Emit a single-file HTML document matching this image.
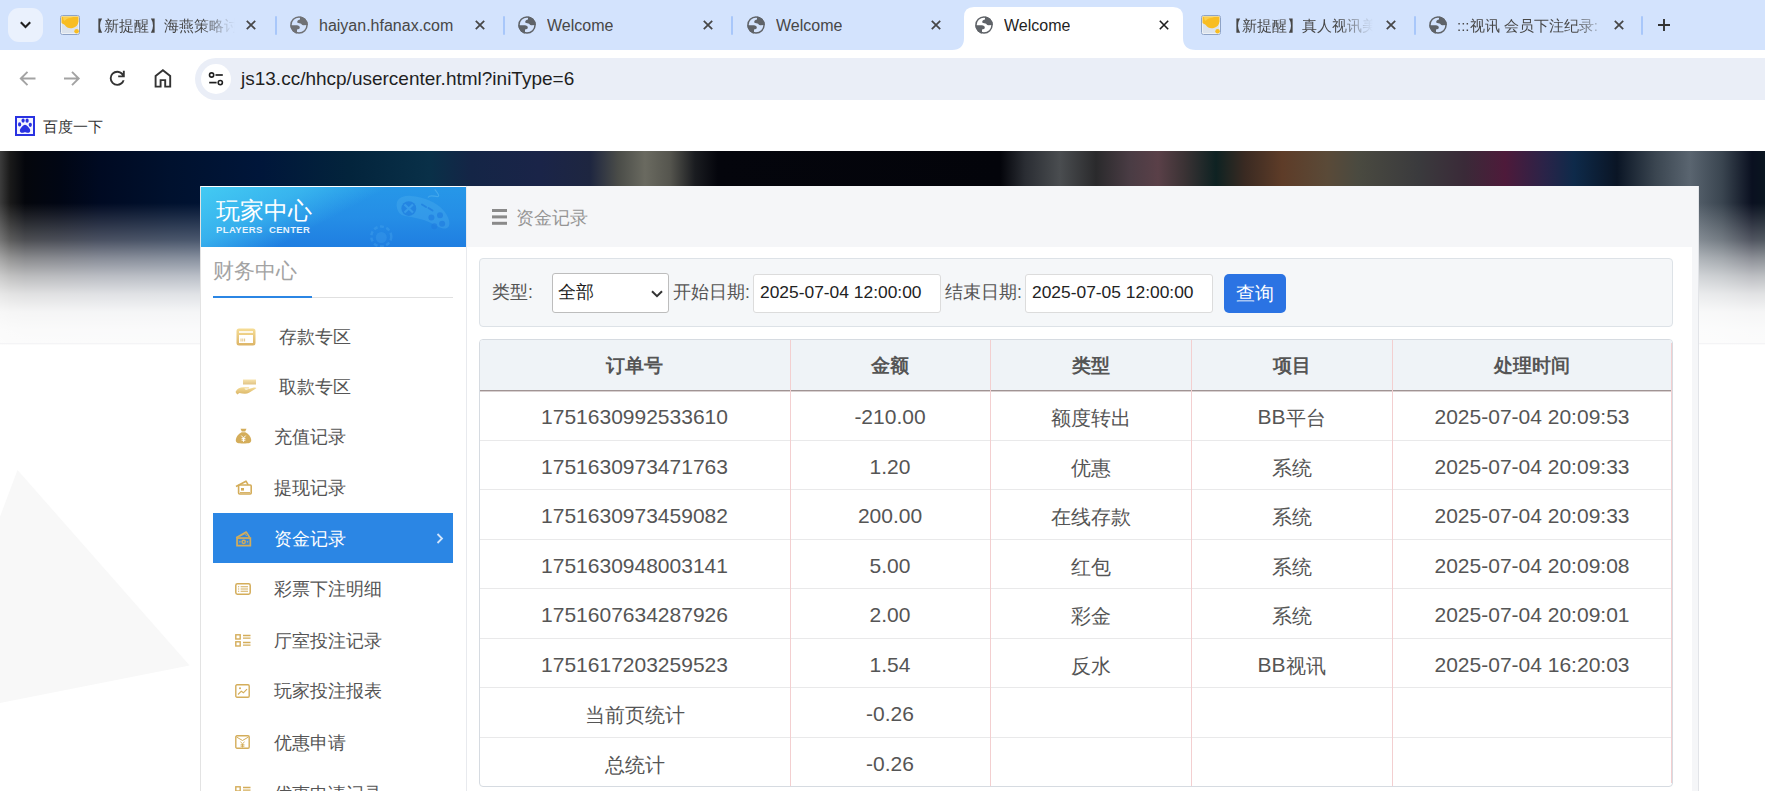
<!DOCTYPE html>
<html><head><meta charset="utf-8">
<style>
*{box-sizing:border-box;margin:0;padding:0}
html,body{width:1765px;height:791px;overflow:hidden;background:#fff;font-family:"Liberation Sans",sans-serif;position:relative}
.abs{position:absolute}
#tabs{left:0;top:0;width:1765px;height:50px;background:#d3e3fd}
#toolbar{left:0;top:50px;width:1765px;height:53px;background:#fff}
#bm{left:0;top:103px;width:1765px;height:48px;background:#fff}
#page{left:0;top:151px;width:1765px;height:640px;background:#fff;overflow:hidden}
.tabt{position:absolute;top:16px;font-size:16px;color:#474747;white-space:nowrap;overflow:hidden;line-height:20px}
.close{position:absolute;top:17px;width:16px;height:16px}
.fav{width:20px;height:20px;border:1px solid #9bb0d3;border-radius:2px;background:linear-gradient(160deg,#fcd535 0%,#f7b21a 55%,#dfe6ef 56%);overflow:hidden}
.sep{position:absolute;top:16px;width:2px;height:19px;background:#a8c7fa;border-radius:1px}
#banner{background:linear-gradient(90deg,#3c3c3c 0px,#1a1a1a 10px,#04060c 25px,#010614 60px,#000a22 100px,#00112e 170px,#00163a 260px,#03243c 350px,#093048 430px,#142546 470px,#1a2448 540px,#1e2640 590px,#4a4c48 618px,#6a6a60 645px,#55554e 670px,#1a1c20 695px,#04050c 718px,#03040a 1000px,#2a2d33 1025px,#4a4d50 1060px,#2a2a2c 1096px,#4a3c44 1130px,#5a4048 1158px,#3a3234 1185px,#0e2222 1216px,#3a2a22 1245px,#5e3c28 1282px,#5a4a38 1327px,#4a4a40 1358px,#3a3a3d 1420px,#3a2a38 1465px,#4e1a3a 1505px,#2a2348 1545px,#0e2a4a 1574px,#0a1525 1617px,#3a4550 1655px,#5a6570 1690px,#3a4550 1722px,#0a1020 1752px,#0a1520 1765px)}
#sbhead{background:linear-gradient(152deg,rgba(70,208,244,0.9) 0%,rgba(62,190,240,0.75) 28%,rgba(45,160,235,0) 50%),linear-gradient(180deg,#2697e8 0%,#258ee6 50%,#1f7ee1 100%)}
.lbl{font-size:17.5px;line-height:24px;color:#555;white-space:nowrap}
.inp{top:123px;width:188px;height:39px;background:#fff;border:1px solid #dcdcdc;border-radius:3px;font-size:17.4px;line-height:35px;color:#222;padding-left:6px;white-space:nowrap}
.mi{font-size:17.5px;line-height:24px;white-space:nowrap}
.th{height:51px;line-height:51px;text-align:center;font-size:18.6px;font-weight:bold;color:#555;white-space:nowrap}
.td{text-align:center;font-size:21px;color:#555;white-space:nowrap}
.cj{font-size:20px;position:relative;top:0.5px}
</style></head><body>
<svg width="0" height="0" style="position:absolute"><defs>
<clipPath id="gclip"><circle cx="9" cy="9" r="8.8"/></clipPath>
<g id="globeg"><path d="M9 0.2 A8.8 8.8 0 1 1 9 17.8 A8.8 8.8 0 1 1 9 0.2 Z M9 1.7 A7.3 7.3 0 1 0 9 16.3 A7.3 7.3 0 1 0 9 1.7 Z"/><path clip-path="url(#gclip)" d="M10 0 L10 3.6 C8.7 3.7 7.2 4.7 7.2 6.1 C7.2 7.3 9.0 7.4 10.4 7.5 C11.5 7.7 12.0 9.2 13.2 9.2 L18 8.9 L18 0 Z M0 9.2 L6.8 9.2 C8.6 9.3 9.8 10.1 9.8 11.4 C9.8 12.8 8.4 13.3 7 13.4 L7 18 L0 18 Z"/></g>
</defs></svg>
<div id="tabs" class="abs">
  <div class="abs" style="left:8px;top:8px;width:35px;height:34px;border-radius:11px;background:#eaf1fd"></div>
  <svg class="abs" style="left:19px;top:19px" width="13" height="12" viewBox="0 0 13 12"><path d="M1.8 3.2 L6.5 7.9 L11.2 3.2" stroke="#1f1f1f" stroke-width="2.1" fill="none"/></svg>
  <!-- active tab -->
  <svg class="abs" style="left:952px;top:7px" width="244" height="43" viewBox="0 0 244 43"><path d="M0 43 Q12 43 12 31 L12 10 Q12 0 22 0 L221 0 Q231 0 231 10 L231 31 Q231 43 244 43 Z" fill="#fff"/></svg>
  <!-- favicon 1 -->
  <svg class="abs" style="left:60px;top:15px" width="20" height="20" viewBox="0 0 20 20"><rect x="0.5" y="0.5" width="19" height="19" rx="2" fill="#fff" stroke="#8ea3c6"/><rect x="1.5" y="1.5" width="17" height="17" fill="#dce3ec"/><path d="M1.5 1.5 H18.5 V6.5 A7.6 7.6 0 0 1 4.8 10 C3.6 8.9 1.5 8.6 1.5 7.6 Z" fill="#f8bd22"/><path d="M3 1.5 H15 C12 3 8 2.5 5 5.5 C4 6.5 3 5 3 1.5 Z" fill="#fde27a" opacity="0.5"/><circle cx="16.6" cy="16.3" r="2.3" fill="#f8bd22"/></svg>
  <div class="tabt" style="left:89px;width:150px;font-size:15px;color:#474747;-webkit-mask-image:linear-gradient(90deg,#000 112px,rgba(0,0,0,0.25) 136px,transparent 146px)">【新提醒】海燕策略讨论</div>
  <svg class="abs x" style="left:246px;top:20px" width="10" height="10" viewBox="0 0 10 10"><path d="M0.8 0.8 L9.2 9.2 M9.2 0.8 L0.8 9.2" stroke="#474747" stroke-width="1.75"/></svg>
  <div class="sep" style="left:275px"></div>
  <svg class="abs globe" style="left:290px;top:16px" width="18" height="18" viewBox="0 0 18 18"><use href="#globeg" fill="#6f7175"/></svg>
  <div class="tabt" style="left:319px">haiyan.hfanax.com</div>
  <svg class="abs x" style="left:475px;top:20px" width="10" height="10" viewBox="0 0 10 10"><path d="M0.8 0.8 L9.2 9.2 M9.2 0.8 L0.8 9.2" stroke="#474747" stroke-width="1.75"/></svg>
  <div class="sep" style="left:503px"></div>
  <svg class="abs globe" style="left:518px;top:16px" width="18" height="18" viewBox="0 0 18 18"><use href="#globeg" fill="#5f6368"/></svg>
  <div class="tabt" style="left:547px">Welcome</div>
  <svg class="abs x" style="left:703px;top:20px" width="10" height="10" viewBox="0 0 10 10"><path d="M0.8 0.8 L9.2 9.2 M9.2 0.8 L0.8 9.2" stroke="#474747" stroke-width="1.75"/></svg>
  <div class="sep" style="left:731px"></div>
  <svg class="abs globe" style="left:747px;top:16px" width="18" height="18" viewBox="0 0 18 18"><use href="#globeg" fill="#5f6368"/></svg>
  <div class="tabt" style="left:776px">Welcome</div>
  <svg class="abs x" style="left:931px;top:20px" width="10" height="10" viewBox="0 0 10 10"><path d="M0.8 0.8 L9.2 9.2 M9.2 0.8 L0.8 9.2" stroke="#474747" stroke-width="1.75"/></svg>
  <svg class="abs globe" style="left:975px;top:16px" width="18" height="18" viewBox="0 0 18 18"><use href="#globeg" fill="#5f6368"/></svg>
  <div class="tabt" style="left:1004px;color:#1f1f1f">Welcome</div>
  <svg class="abs x" style="left:1159px;top:20px" width="10" height="10" viewBox="0 0 10 10"><path d="M0.8 0.8 L9.2 9.2 M9.2 0.8 L0.8 9.2" stroke="#1f1f1f" stroke-width="1.6"/></svg>
  <svg class="abs" style="left:1201px;top:15px" width="20" height="20" viewBox="0 0 20 20"><rect x="0.5" y="0.5" width="19" height="19" rx="2" fill="#fff" stroke="#8ea3c6"/><rect x="1.5" y="1.5" width="17" height="17" fill="#dce3ec"/><path d="M1.5 1.5 H18.5 V6.5 A7.6 7.6 0 0 1 4.8 10 C3.6 8.9 1.5 8.6 1.5 7.6 Z" fill="#f8bd22"/><path d="M3 1.5 H15 C12 3 8 2.5 5 5.5 C4 6.5 3 5 3 1.5 Z" fill="#fde27a" opacity="0.5"/><circle cx="16.6" cy="16.3" r="2.3" fill="#f8bd22"/></svg>
  <div class="tabt" style="left:1227px;width:150px;font-size:15px;color:#474747;-webkit-mask-image:linear-gradient(90deg,#000 112px,rgba(0,0,0,0.25) 136px,transparent 146px)">【新提醒】真人视讯美女</div>
  <svg class="abs x" style="left:1386px;top:20px" width="10" height="10" viewBox="0 0 10 10"><path d="M0.8 0.8 L9.2 9.2 M9.2 0.8 L0.8 9.2" stroke="#474747" stroke-width="1.75"/></svg>
  <div class="sep" style="left:1414px"></div>
  <svg class="abs globe" style="left:1429px;top:16px" width="18" height="18" viewBox="0 0 18 18"><use href="#globeg" fill="#5f6368"/></svg>
  <div class="tabt" style="left:1457px;width:152px;font-size:15px;color:#474747;-webkit-mask-image:linear-gradient(90deg,#000 118px,rgba(0,0,0,0.3) 140px,transparent 150px)">:::视讯 会员下注纪录:</div>
  <svg class="abs x" style="left:1614px;top:20px" width="10" height="10" viewBox="0 0 10 10"><path d="M0.8 0.8 L9.2 9.2 M9.2 0.8 L0.8 9.2" stroke="#474747" stroke-width="1.75"/></svg>
  <div class="sep" style="left:1641px"></div>
  <svg class="abs" style="left:1658px;top:19px" width="12" height="12" viewBox="0 0 12 12"><path d="M6 0 V12 M0 6 H12" stroke="#333" stroke-width="1.9"/></svg>
</div>

<div id="toolbar" class="abs">
  <svg class="abs" style="left:19px;top:20px" width="18" height="17" viewBox="0 0 18 17"><path d="M16.5 8.5 H2.5 M8.5 1.8 L1.8 8.5 L8.5 15.2" stroke="#a3a3a3" stroke-width="1.9" fill="none"/></svg>
  <svg class="abs" style="left:63px;top:20px" width="18" height="17" viewBox="0 0 18 17"><path d="M1 8.5 H15 M9 1.8 L15.7 8.5 L9 15.2" stroke="#a3a3a3" stroke-width="1.9" fill="none"/></svg>
  <svg class="abs" style="left:106px;top:17px" width="22.5" height="22.5" viewBox="0 -960 960 960"><path fill="#333" d="M480-160q-134 0-227-93t-93-227q0-134 93-227t227-93q69 0 132 28.5T720-690v-110h80v280H520v-80h168q-32-56-87.5-88T480-720q-100 0-170 70t-70 170q0 100 70 170t170 70q77 0 139-44t87-116h84q-28 106-114 173t-196 67Z"/></svg>
  <svg class="abs" style="left:154px;top:19px" width="18" height="19" viewBox="0 0 18 19"><path d="M1.6 17.6 V6.9 L8.9 1.3 L16.2 6.9 V17.6 H11.2 V11.1 H6.6 V17.6 Z" stroke="#333" stroke-width="1.9" fill="none" stroke-linejoin="miter"/></svg>
  <div class="abs" style="left:195px;top:8px;width:1600px;height:42px;border-radius:21px;background:#eaeef7"></div>
  <div class="abs" style="left:201px;top:14px;width:30px;height:30px;border-radius:15px;background:#fff"></div>
  <svg class="abs" style="left:208px;top:21px" width="16" height="16" viewBox="0 0 16 16"><circle cx="3.6" cy="4" r="2.1" stroke="#1f1f1f" stroke-width="1.6" fill="none"/><path d="M7.5 4 H14.8" stroke="#1f1f1f" stroke-width="1.7"/><circle cx="12.3" cy="11.6" r="2.1" stroke="#1f1f1f" stroke-width="1.6" fill="none"/><path d="M1.2 11.6 H8.6" stroke="#1f1f1f" stroke-width="1.7"/></svg>
  <div class="abs" style="left:241px;top:17px;font-size:19px;line-height:24px;color:#1f1f1f;white-space:nowrap">js13.cc/hhcp/usercenter.html?iniType=6</div>
</div>
<div id="bm" class="abs">
  <svg class="abs" style="left:15px;top:13px" width="20" height="20" viewBox="0 0 20 20"><rect x="1" y="1" width="18" height="18" fill="#f4f5ff" stroke="#2932e1" stroke-width="2"/><ellipse cx="4.6" cy="8.4" rx="1.6" ry="2.1" fill="#2932e1"/><ellipse cx="8.1" cy="4.6" rx="1.6" ry="2.1" fill="#2932e1"/><ellipse cx="12.1" cy="4.7" rx="1.6" ry="2.1" fill="#2932e1"/><ellipse cx="15.3" cy="8.8" rx="1.6" ry="2.1" fill="#2932e1"/><path d="M10 8.8 C8 8.8 6.6 11.2 5.4 12.8 C4.2 14.6 5.2 17 7.3 16.8 C8.6 16.7 9.2 16.2 10 16.2 C10.8 16.2 11.6 16.7 12.9 16.8 C15 17 15.9 14.6 14.7 12.8 C13.5 11.2 12 8.8 10 8.8 Z" fill="#2932e1"/></svg>
  <div class="abs" style="left:43px;top:14px;font-size:15px;line-height:20px;color:#333;white-space:nowrap">百度一下</div>
</div>

<div id="page" class="abs">
  <div class="abs" id="banner" style="left:0;top:0;width:1765px;height:194px"></div>
  <div class="abs" style="left:0;top:52px;width:1765px;height:142px;background:linear-gradient(180deg,rgba(255,255,255,0) 0px,rgba(255,255,255,0.15) 19px,rgba(255,255,255,0.29) 37px,rgba(255,255,255,0.53) 55px,rgba(255,255,255,0.73) 73px,rgba(255,255,255,0.88) 91px,rgba(255,255,255,0.96) 109px,rgba(255,255,255,0.98) 127px,rgba(255,255,255,0.985) 142px)"></div>
  <div class="abs" style="left:0;top:192px;width:1765px;height:1px;background:#f4f4f6"></div>
  <svg class="abs" style="left:0;top:310px" width="200" height="250" viewBox="0 0 200 250"><path d="M0 55.7 L17.5 9 L189.6 204.5 L0 242 Z" fill="#f8f8f8"/></svg>
  <!-- sidebar -->
  <div class="abs" style="left:200px;top:35px;width:267px;height:620px;background:#fff;border-left:1px solid #e3e3e3;border-right:1px solid #e8eaee"></div>
  <div class="abs" id="sbhead" style="left:201px;top:36px;width:265px;height:60px"></div>
  <svg class="abs" style="left:201px;top:36px" width="265" height="60" viewBox="0 0 265 60">
<g opacity="0.55">
<path d="M196 21 C194 13 200 8 210 9 C222 10 236 15 243 24 C249 31 250 39 246 41 C242 43 236 39 230 36 C222 32 212 30 204 29 C199 28 197 25 196 21 Z" fill="#5ab8f0" opacity="0.5"/>
</g>
<circle cx="207.8" cy="21.6" r="7.4" fill="#1f7ddf" opacity="0.75"/>
<path d="M203.5 17.5 L212 25.5 M212 17.5 L203.5 25.5" stroke="#3aa0ec" stroke-width="2.2" opacity="0.8"/>
<path d="M221 17.5 L225 20 M227.5 21 L231.5 23.5" stroke="#1f7ddf" stroke-width="2" stroke-linecap="round" opacity="0.7"/>
<circle cx="230.4" cy="30.6" r="3" fill="#1f7ddf" opacity="0.7"/><circle cx="239" cy="28.2" r="3" fill="#1f7ddf" opacity="0.7"/><circle cx="233.3" cy="39.3" r="3" fill="#1f7ddf" opacity="0.7"/><circle cx="241.1" cy="36.8" r="3" fill="#1f7ddf" opacity="0.7"/>
<path d="M227 10.5 C229 7 234 10 237 9.5 C239 9 236 5 233.7 2.3" stroke="#55b4ee" stroke-width="1.2" fill="none" opacity="0.6"/>
<circle cx="180.3" cy="49.5" r="10" fill="none" stroke="#4aa8ee" stroke-width="2.5" stroke-dasharray="4 2.5" opacity="0.35"/>
<circle cx="180.3" cy="50.5" r="5.5" fill="#45a6ee" opacity="0.3"/>
</svg>
  <div class="abs" style="left:216px;top:45px;font-size:24px;line-height:30px;color:#fff;white-space:nowrap">玩家中心</div>
  <div class="abs" style="left:216px;top:73px;font-size:9.5px;line-height:12px;color:#e6f3fd;font-weight:bold;white-space:nowrap;letter-spacing:0.4px">PLAYERS&nbsp;&nbsp;CENTER</div>
  <div class="abs" style="left:213px;top:106px;font-size:21px;line-height:28px;color:#a3a3a3;white-space:nowrap">财务中心</div>
  <div class="abs" style="left:213px;top:146px;width:240px;height:1px;background:#e0e0e0"></div>
  <div class="abs" style="left:213px;top:145px;width:99px;height:2px;background:#2b86e4"></div>
  <div class="abs" style="left:213px;top:362px;width:240px;height:50px;background:#2b86e4"></div>
  <div id="menu"><div class="abs mi" style="left:279px;top:173.5px;color:#555">存款专区</div><div class="abs" style="left:236px;top:177px;line-height:0"><svg width="20" height="18" viewBox="0 0 20 18"><defs><linearGradient id="gcard" x1="0" y1="0" x2="0" y2="1"><stop offset="0" stop-color="#f6dd96"/><stop offset="1" stop-color="#dcb466"/></linearGradient></defs><rect x="0.5" y="0.5" width="19" height="17" rx="2.5" fill="url(#gcard)"/><rect x="3" y="3.2" width="14" height="1.6" fill="#fff"/><rect x="3" y="7" width="14" height="8" fill="#fff"/><path d="M5 10.5 V13.5 M6.8 10.5 V13.5 M8.6 10.5 V13.5" stroke="#e0bf7a" stroke-width="0.9"/></svg></div><div class="abs mi" style="left:279px;top:223.5px;color:#555">取款专区</div><div class="abs" style="left:235px;top:228px;line-height:0"><svg width="22" height="16" viewBox="0 0 22 16"><defs><linearGradient id="ghand" x1="0" y1="0" x2="0" y2="1"><stop offset="0" stop-color="#f5dc98"/><stop offset="1" stop-color="#d9b465"/></linearGradient></defs><rect x="8" y="0.5" width="13" height="5" fill="url(#ghand)" opacity="0.8"/><path d="M0.5 13 C2 9.5 5 8.2 8.5 8.2 L13.5 8.2 C14.5 8.2 14.5 9.6 13.5 9.6 L9.5 9.6 C9.8 10.6 10.6 10.8 12 10.6 L18 8.8 C19.5 8.4 21 8.6 21.3 9.2 L14 13.8 C11.5 15.2 7.5 14.6 4.5 14 L2.2 15.6 Z" fill="url(#ghand)"/></svg></div><div class="abs mi" style="left:273.5px;top:274.0px;color:#555">充值记录</div><div class="abs" style="left:235px;top:277px;line-height:0"><svg width="17" height="16" viewBox="0 0 17 16"><path d="M5.5 0.8 L11.5 0.8 L10.2 3.6 L6.8 3.6 Z" fill="#d4ad5a"/><path d="M6.6 4.2 L10.4 4.2 C13.6 6 16.4 9.2 16.2 12.6 C16 15 14.2 15.6 8.5 15.6 C2.8 15.6 1 15 0.8 12.6 C0.6 9.2 3.4 6 6.6 4.2 Z" fill="#d4ad5a"/><path d="M6.3 7.6 L8.5 10 L10.7 7.6 M8.5 10 V13.8 M6.6 10.6 H10.4 M6.6 12.2 H10.4" stroke="#fff" stroke-width="1" fill="none"/></svg></div><div class="abs mi" style="left:273.5px;top:325.0px;color:#555">提现记录</div><div class="abs" style="left:235px;top:329px;line-height:0"><svg width="17" height="15" viewBox="0 0 17 15"><path d="M1 6.5 L11 1.2 L13.2 4.8" stroke="#d4ad5a" stroke-width="1.6" fill="none" stroke-linejoin="round"/><rect x="3.6" y="5" width="12.6" height="9" rx="1" fill="none" stroke="#d4ad5a" stroke-width="1.6"/><rect x="6" y="8" width="3" height="2.6" fill="#d4ad5a"/><path d="M5 12.6 H15" stroke="#d4ad5a" stroke-width="1"/></svg></div><div class="abs mi" style="left:273.5px;top:375.5px;color:#fff">资金记录</div><div class="abs" style="left:235px;top:380px;line-height:0"><svg width="17" height="16" viewBox="0 0 17 16"><path d="M1.2 6.8 L11.2 1 L14.6 6.4" stroke="#d4ad5a" stroke-width="1.6" fill="none" stroke-linejoin="round"/><path d="M5 5.2 L10.2 2.6 L11.6 5" stroke="#d4ad5a" stroke-width="0.9" fill="none"/><rect x="1.2" y="6.2" width="15" height="9.3" fill="#d4ad5a"/><rect x="2.9" y="7.9" width="11.6" height="5.9" fill="#2b86e4" opacity="0.9"/><circle cx="8.7" cy="10.85" r="2.3" fill="#d4ad5a"/><circle cx="8.7" cy="10.85" r="0.9" fill="#2b86e4"/><circle cx="4.9" cy="10.85" r="0.8" fill="#d4ad5a"/><circle cx="12.5" cy="10.85" r="0.8" fill="#d4ad5a"/></svg></div><div class="abs mi" style="left:273.5px;top:426.3px;color:#555">彩票下注明细</div><div class="abs" style="left:235px;top:432px;line-height:0"><svg width="16" height="12" viewBox="0 0 16 12"><rect x="0.8" y="0.8" width="14.4" height="10.4" rx="1.6" fill="none" stroke="#d4ad5a" stroke-width="1.5"/><path d="M3 3.8 H4.2 M3 6 H4.2 M3 8.2 H4.2 M5.6 3.8 H13 M5.6 6 H13 M5.6 8.2 H13" stroke="#d4ad5a" stroke-width="1.1"/></svg></div><div class="abs mi" style="left:273.5px;top:477.5px;color:#555">厅室投注记录</div><div class="abs" style="left:235px;top:483px;line-height:0"><svg width="16" height="13" viewBox="0 0 16 13"><rect x="0.8" y="0.8" width="4.4" height="4.2" fill="none" stroke="#d4ad5a" stroke-width="1.4"/><rect x="0.8" y="7.8" width="4.4" height="4.2" fill="none" stroke="#d4ad5a" stroke-width="1.4"/><path d="M8 1.5 H15.5 M8 4.2 H15.5 M8 8.5 H15.5 M8 11.2 H15.5" stroke="#d4ad5a" stroke-width="1.3"/></svg></div><div class="abs mi" style="left:273.5px;top:528.4px;color:#555">玩家投注报表</div><div class="abs" style="left:235px;top:533px;line-height:0"><svg width="15" height="14" viewBox="0 0 15 14"><rect x="0.8" y="0.8" width="13.4" height="12.4" rx="1.2" fill="none" stroke="#d4ad5a" stroke-width="1.4"/><circle cx="5" cy="4.2" r="1" fill="#d4ad5a"/><path d="M3 10.5 L6.3 7.2 L8.4 8.8 L12 5.2" stroke="#d4ad5a" stroke-width="1.2" fill="none"/></svg></div><div class="abs mi" style="left:273.5px;top:579.6px;color:#555">优惠申请</div><div class="abs" style="left:235px;top:584px;line-height:0"><svg width="15" height="14" viewBox="0 0 15 14"><rect x="0.8" y="0.8" width="13.4" height="12.4" rx="1.2" fill="none" stroke="#d4ad5a" stroke-width="1.4"/><path d="M1.5 2 L7.5 5.5 L13.5 2 M5.4 6.8 L7.5 8.8 L9.6 6.8 M7.5 8.8 V12.5 M5.6 9.8 H9.4 M5.6 11.2 H9.4" stroke="#d4ad5a" stroke-width="1" fill="none"/></svg></div><div class="abs mi" style="left:273.5px;top:630.5px;color:#555">优惠申请记录</div><div class="abs" style="left:235px;top:635px;line-height:0"><svg width="16" height="13" viewBox="0 0 16 13"><rect x="0.8" y="0.8" width="4.4" height="4.2" fill="none" stroke="#d4ad5a" stroke-width="1.4"/><rect x="0.8" y="7.8" width="4.4" height="4.2" fill="none" stroke="#d4ad5a" stroke-width="1.4"/><path d="M8 1.5 H15.5 M8 4.2 H15.5 M8 8.5 H15.5 M8 11.2 H15.5" stroke="#d4ad5a" stroke-width="1.3"/></svg></div><svg class="abs" style="left:436px;top:382px" width="8" height="11" viewBox="0 0 8 11"><path d="M1.5 1 L6 5.5 L1.5 10" stroke="#d2e5fb" stroke-width="1.8" fill="none"/></svg></div><!--menuend-->
  <!-- main -->
  <div class="abs" style="left:467px;top:35px;width:1232px;height:620px;background:#f5f6f8;border-right:1px solid #e2e4e8"></div>
  <div class="abs" style="left:467px;top:96px;width:1225px;height:600px;background:#fff"></div>
  <div class="abs" style="left:492px;top:58px;width:15px;height:2.5px;background:#8a8a8a;box-shadow:0 6.4px 0 #8a8a8a,0 12.8px 0 #8a8a8a"></div>
  <div class="abs" style="left:516px;top:55px;font-size:18px;line-height:24px;color:#959595;white-space:nowrap">资金记录</div>
  <!-- search -->
  <div class="abs" style="left:479px;top:107px;width:1194px;height:69px;background:#f5f7f9;border:1px solid #dde2e7;border-radius:4px"></div>
  <div class="abs lbl" style="left:492px;top:129px">类型:</div>
  <div class="abs" style="left:552px;top:122px;width:117px;height:40px;background:#fff;border:1px solid #bdbdbd;border-radius:3px"></div>
  <div class="abs" style="left:558px;top:129px;font-size:17.5px;line-height:24px;color:#222;white-space:nowrap">全部</div>
  <svg class="abs" style="left:651px;top:139px" width="12" height="8" viewBox="0 0 12 8"><path d="M1 1.2 L6 6.2 L11 1.2" stroke="#333" stroke-width="2" fill="none"/></svg>
  <div class="abs lbl" style="left:673px;top:129px">开始日期:</div>
  <div class="abs inp" style="left:753px"><span>2025-07-04 12:00:00</span></div>
  <div class="abs lbl" style="left:945px;top:129px">结束日期:</div>
  <div class="abs inp" style="left:1025px"><span>2025-07-05 12:00:00</span></div>
  <div class="abs" style="left:1224px;top:123px;width:62px;height:39px;background:#2b73e3;border-radius:5px;color:#fff;font-size:19px;line-height:39px;text-align:center">查询</div>
  <!-- table -->
  <div id="tbl"><div class="abs" style="left:479px;top:188px;width:1194px;height:448px;border:1px solid #d6dbe1;border-radius:4px;background:#fff;overflow:hidden"><div style="height:51px;background:#eff3f7"></div></div><div class="abs" style="left:480px;top:239px;width:1192px;height:1px;background:#a09494"></div><div class="abs" style="left:480px;top:240px;width:1192px;height:1px;background:#d8d0d0"></div><div class="abs" style="left:480px;top:289px;width:1192px;height:1px;background:#e9e9ea"></div><div class="abs" style="left:480px;top:338px;width:1192px;height:1px;background:#e9e9ea"></div><div class="abs" style="left:480px;top:388px;width:1192px;height:1px;background:#e9e9ea"></div><div class="abs" style="left:480px;top:437px;width:1192px;height:1px;background:#e9e9ea"></div><div class="abs" style="left:480px;top:487px;width:1192px;height:1px;background:#e9e9ea"></div><div class="abs" style="left:480px;top:536px;width:1192px;height:1px;background:#e9e9ea"></div><div class="abs" style="left:480px;top:586px;width:1192px;height:1px;background:#e9e9ea"></div><div class="abs" style="left:790px;top:189px;width:1px;height:446px;background:#f3cfd0"></div><div class="abs" style="left:990px;top:189px;width:1px;height:446px;background:#f3cfd0"></div><div class="abs" style="left:1191px;top:189px;width:1px;height:446px;background:#f3cfd0"></div><div class="abs" style="left:1392px;top:189px;width:1px;height:446px;background:#f3cfd0"></div><div class="abs" style="left:1671px;top:192px;width:1px;height:440px;background:#f3cfd0"></div><div class="abs th" style="left:479px;width:311px;top:189px">订单号</div><div class="abs th" style="left:790px;width:200px;top:189px">金额</div><div class="abs th" style="left:990px;width:201px;top:189px">类型</div><div class="abs th" style="left:1191px;width:201px;top:189px">项目</div><div class="abs th" style="left:1392px;width:280px;top:189px">处理时间</div><div class="abs td" style="left:479px;width:311px;top:241px;height:50px;line-height:50px">1751630992533610</div><div class="abs td" style="left:790px;width:200px;top:241px;height:50px;line-height:50px">-210.00</div><div class="abs td" style="left:990px;width:201px;top:241px;height:50px;line-height:50px"><span class="cj">额度转出</span></div><div class="abs td" style="left:1191px;width:201px;top:241px;height:50px;line-height:50px">BB<span class="cj">平台</span></div><div class="abs td" style="left:1392px;width:280px;top:241px;height:50px;line-height:50px">2025-07-04 20:09:53</div><div class="abs td" style="left:479px;width:311px;top:291px;height:49px;line-height:49px">1751630973471763</div><div class="abs td" style="left:790px;width:200px;top:291px;height:49px;line-height:49px">1.20</div><div class="abs td" style="left:990px;width:201px;top:291px;height:49px;line-height:49px"><span class="cj">优惠</span></div><div class="abs td" style="left:1191px;width:201px;top:291px;height:49px;line-height:49px"><span class="cj">系统</span></div><div class="abs td" style="left:1392px;width:280px;top:291px;height:49px;line-height:49px">2025-07-04 20:09:33</div><div class="abs td" style="left:479px;width:311px;top:340px;height:50px;line-height:50px">1751630973459082</div><div class="abs td" style="left:790px;width:200px;top:340px;height:50px;line-height:50px">200.00</div><div class="abs td" style="left:990px;width:201px;top:340px;height:50px;line-height:50px"><span class="cj">在线存款</span></div><div class="abs td" style="left:1191px;width:201px;top:340px;height:50px;line-height:50px"><span class="cj">系统</span></div><div class="abs td" style="left:1392px;width:280px;top:340px;height:50px;line-height:50px">2025-07-04 20:09:33</div><div class="abs td" style="left:479px;width:311px;top:390px;height:49px;line-height:49px">1751630948003141</div><div class="abs td" style="left:790px;width:200px;top:390px;height:49px;line-height:49px">5.00</div><div class="abs td" style="left:990px;width:201px;top:390px;height:49px;line-height:49px"><span class="cj">红包</span></div><div class="abs td" style="left:1191px;width:201px;top:390px;height:49px;line-height:49px"><span class="cj">系统</span></div><div class="abs td" style="left:1392px;width:280px;top:390px;height:49px;line-height:49px">2025-07-04 20:09:08</div><div class="abs td" style="left:479px;width:311px;top:439px;height:50px;line-height:50px">1751607634287926</div><div class="abs td" style="left:790px;width:200px;top:439px;height:50px;line-height:50px">2.00</div><div class="abs td" style="left:990px;width:201px;top:439px;height:50px;line-height:50px"><span class="cj">彩金</span></div><div class="abs td" style="left:1191px;width:201px;top:439px;height:50px;line-height:50px"><span class="cj">系统</span></div><div class="abs td" style="left:1392px;width:280px;top:439px;height:50px;line-height:50px">2025-07-04 20:09:01</div><div class="abs td" style="left:479px;width:311px;top:489px;height:49px;line-height:49px">1751617203259523</div><div class="abs td" style="left:790px;width:200px;top:489px;height:49px;line-height:49px">1.54</div><div class="abs td" style="left:990px;width:201px;top:489px;height:49px;line-height:49px"><span class="cj">反水</span></div><div class="abs td" style="left:1191px;width:201px;top:489px;height:49px;line-height:49px">BB<span class="cj">视讯</span></div><div class="abs td" style="left:1392px;width:280px;top:489px;height:49px;line-height:49px">2025-07-04 16:20:03</div><div class="abs td" style="left:479px;width:311px;top:538px;height:50px;line-height:50px"><span class="cj">当前页统计</span></div><div class="abs td" style="left:790px;width:200px;top:538px;height:50px;line-height:50px">-0.26</div><div class="abs td" style="left:479px;width:311px;top:588px;height:49px;line-height:49px"><span class="cj">总统计</span></div><div class="abs td" style="left:790px;width:200px;top:588px;height:49px;line-height:49px">-0.26</div></div><!--tblend-->
</div>

</body></html>
